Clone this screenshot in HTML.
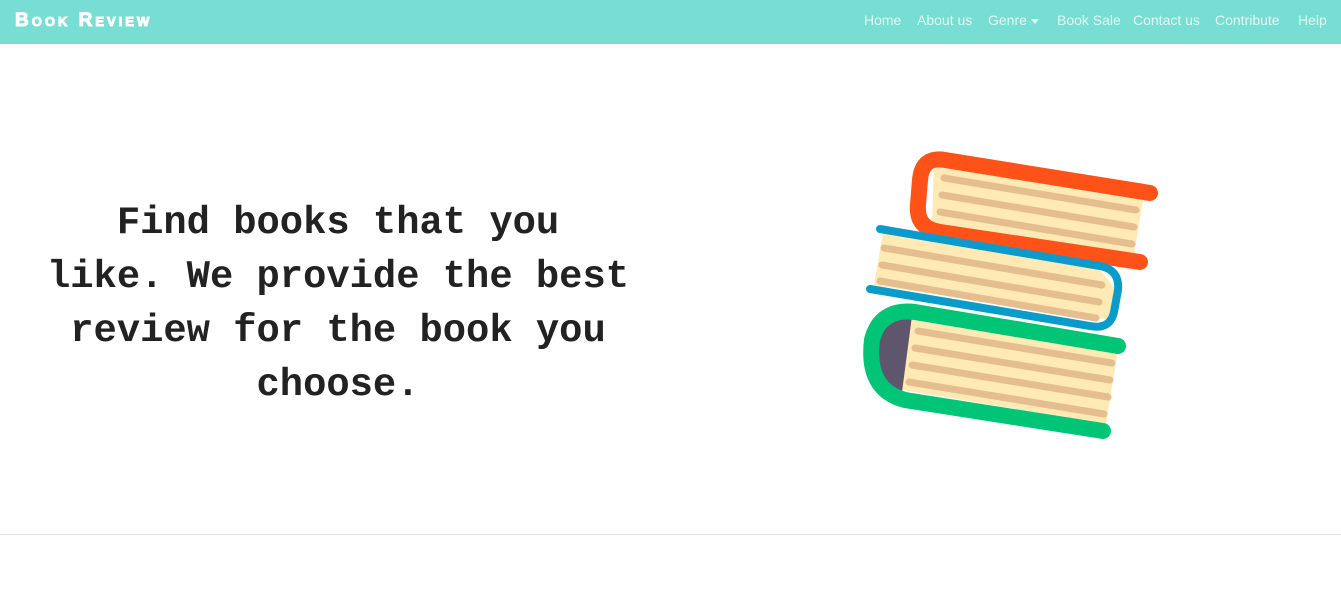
<!DOCTYPE html>
<html><head><meta charset="utf-8"><style>
body{margin:0;width:1341px;height:594px;background:#fff;position:relative;overflow:hidden;font-family:"Liberation Sans",sans-serif}
.nav{position:absolute;left:0;top:0;width:1341px;height:44px;background:#78ddd3}
.brand{position:absolute;left:15px;top:10px;color:#fff;font:900 19px "Liberation Sans",sans-serif;letter-spacing:3px;font-variant:small-caps;-webkit-text-stroke:1px #fff}
.nav a{position:absolute;top:12px;color:#e2f7f4;font-size:14px;text-decoration:none;white-space:nowrap}
.caret{display:inline-block;border-left:4px solid transparent;border-right:4px solid transparent;border-top:5px solid #e2f7f4;vertical-align:middle;margin-left:4px}
.hero{position:absolute;left:30px;top:196px;width:616px;text-align:center;font:bold 38.8px/54px "Liberation Mono",monospace;color:#222}
.hr{position:absolute;left:0;top:534px;width:1341px;height:1px;background:#e3e3e3}
</style></head><body>
<div class="nav">
<div class="brand">Book Review</div>
<a style="left:864px">Home</a>
<a style="left:917px">About us</a>
<a style="left:988px">Genre<span class="caret"></span></a>
<a style="left:1057px">Book Sale</a>
<a style="left:1133px">Contact us</a>
<a style="left:1215px">Contribute</a>
<a style="left:1298px">Help</a>
</div>
<div class="hero">Find books that you<br>like. We provide the best<br>review for the book you<br>choose.</div>
<svg style="position:absolute;left:0;top:0" width="1341" height="594">
<polygon points="934,166 1143,200 1134,255 932,224" fill="#ffe9b4"/>
<g stroke="#e5be8f" stroke-width="7" stroke-linecap="round">
<line x1="944" y1="178" x2="1136" y2="210"/><line x1="942" y1="195" x2="1134" y2="227"/><line x1="940" y1="212" x2="1132" y2="244"/>
</g>
<path d="M1150,193 L945,160 Q922,156 920,180 L918,205 Q916,228 940,232 L1140,262" stroke="#ff5219" stroke-width="16" fill="none" stroke-linecap="round"/>
<polygon points="883,233 1100,270 1116,290 1110,320 874,285" fill="#ffe9b4"/>
<g stroke="#e5be8f" stroke-width="7" stroke-linecap="round">
<line x1="884" y1="248" x2="1102" y2="285"/><line x1="882" y1="265" x2="1099" y2="302"/><line x1="880" y1="281" x2="1096" y2="318"/>
</g>
<path d="M880,229 L1100,266 Q1120,270 1118,290 L1114,312 Q1110,330 1090,326 L870,289" stroke="#0b9bcb" stroke-width="8" fill="none" stroke-linecap="round"/>
<polygon points="910,318 1118,350 1106,424 902,390" fill="#ffe9b4"/>
<path d="M912,316 Q876,322 876,356 Q878,384 902,392 Z" fill="#5f566e"/>
<g stroke="#e5be8f" stroke-width="7" stroke-linecap="round">
<line x1="918" y1="331" x2="1112" y2="363"/><line x1="915" y1="348" x2="1110" y2="380"/><line x1="912" y1="365" x2="1108" y2="397"/><line x1="909" y1="382" x2="1104" y2="414"/>
</g>
<path d="M1118,346 L915,312 Q880,308 872,340 Q866,390 905,400 L1103,431" stroke="#00c476" stroke-width="16" fill="none" stroke-linecap="round"/>
</svg>
<div class="hr"></div>
</body></html>
